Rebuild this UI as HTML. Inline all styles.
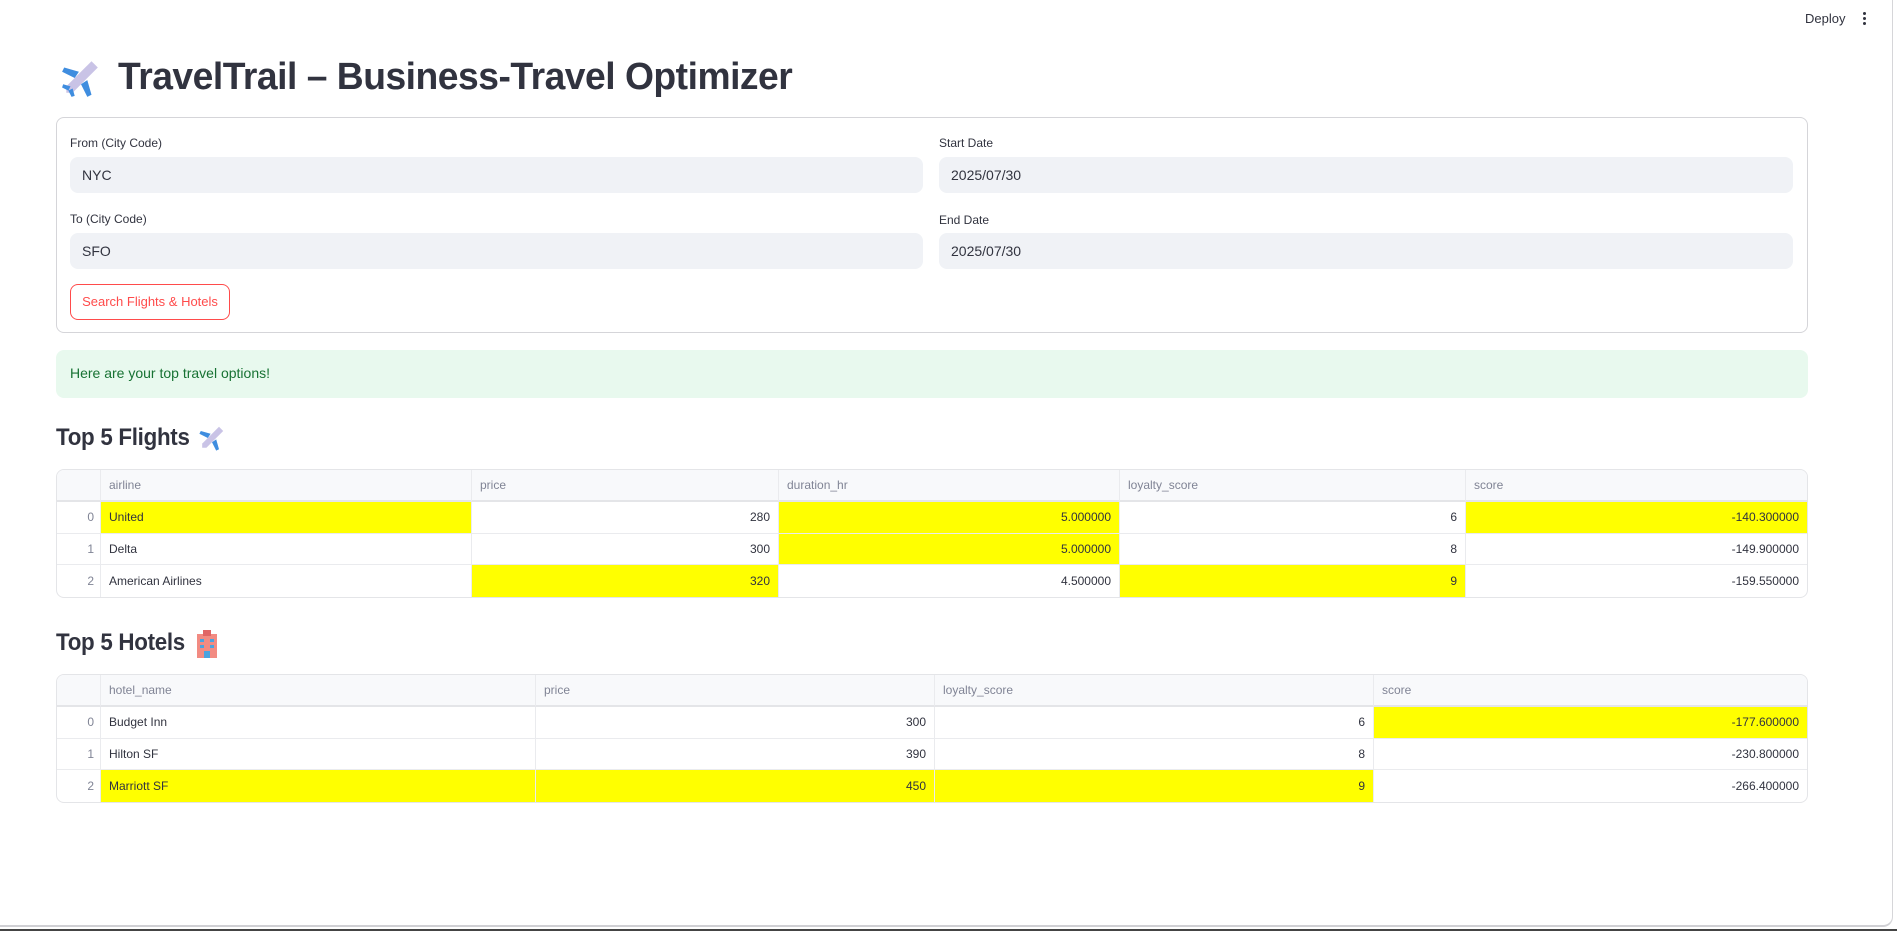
<!DOCTYPE html>
<html><head><meta charset="utf-8">
<style>
*{box-sizing:border-box;margin:0;padding:0}
html,body{width:1897px;height:931px;overflow:hidden;background:#fff;font-family:"Liberation Sans",sans-serif;color:#31333f}
.abs{position:absolute}
.frame{position:absolute;left:0;top:0;width:1893px;height:927px;border-right:1px solid #d6d6d9;border-bottom:2px solid #d0d0d4;border-bottom-right-radius:10px}
.bottom{position:absolute;left:0;top:929px;width:1897px;height:2px;background:#444}
.deploy{left:1805px;top:11px;font-size:13px;color:#31333f}
.dots{left:1863px;top:12px;width:4px}
.dots i{display:block;width:3px;height:3px;border-radius:50%;background:#31333f;margin-bottom:2px}
h1{position:absolute;left:118px;top:56px;font-size:38px;font-weight:700;letter-spacing:-0.5px;white-space:nowrap;transform:scaleX(0.98);transform-origin:left}
.form{left:56px;top:117px;width:1752px;height:216px;border:1px solid #d5d5d9;border-radius:8px}
.lbl{font-size:12px;color:#31333f}
.inp{background:#f0f2f6;border-radius:8px;height:36px;font-size:14px;padding:10px 12px;color:#31333f}
.btn{left:70px;top:284px;width:160px;height:36px;border:1px solid #ff4b4b;border-radius:8px;color:#ff4b4b;font-size:13px;text-align:center;line-height:34px}
.ok{left:56px;top:350px;width:1752px;height:48px;background:#e8f9ee;border-radius:8px;color:#177233;font-size:14px;padding:15px 14px}
h2{position:absolute;font-size:24px;font-weight:700;letter-spacing:-0.3px;white-space:nowrap;transform:scaleX(0.93);transform-origin:left}
table{position:absolute;border-collapse:separate;border-spacing:0;border:1px solid #e4e5e8;border-radius:8px;overflow:hidden;font-size:12px;table-layout:fixed;color:#31333f}
td,th{height:31.5px;border-right:1px solid #eaebee;border-bottom:1px solid #eaebee;padding:0 8px;font-weight:400;white-space:nowrap}
th{background:#f8f9fb;color:#808495;text-align:left;height:32px;border-bottom:2px solid #e4e5e8}
tr:last-child td{border-bottom:none}
td:last-child,th:last-child{border-right:none}
td.i{text-align:right;color:#808495;padding-right:6px}
td.n{text-align:right}
.y{background:#ffff00}
</style></head><body>
<div class="frame"></div><div class="bottom"></div>
<div class="abs deploy">Deploy</div>
<div class="abs dots"><i></i><i></i><i></i></div>

<svg class="abs" style="left:60px;top:57px" width="42" height="42" viewBox="0 0 40 40">
<path d="M30 4 L36 10 L12 34 L6 34 L6 28 Z" fill="#c9c3e6"/>
<path d="M18 14 L4 10 L2 14 L14 20 Z" fill="#3f8ddf"/>
<path d="M26 22 L30 36 L26 38 L20 26 Z" fill="#3f8ddf"/>
<path d="M10 28 L3 26 L2 29 L8 32 Z" fill="#3f8ddf"/>
<path d="M12 30 L14 37 L11 38 L8 32 Z" fill="#3f8ddf"/>
</svg>
<h1>TravelTrail – Business-Travel Optimizer</h1>

<div class="abs form"></div>
<div class="abs lbl" style="left:70px;top:136px">From (City Code)</div>
<div class="abs inp" style="left:70px;top:157px;width:853px">NYC</div>
<div class="abs lbl" style="left:939px;top:136px">Start Date</div>
<div class="abs inp" style="left:939px;top:157px;width:854px">2025/07/30</div>
<div class="abs lbl" style="left:70px;top:212px">To (City Code)</div>
<div class="abs inp" style="left:70px;top:233px;width:853px">SFO</div>
<div class="abs lbl" style="left:939px;top:213px">End Date</div>
<div class="abs inp" style="left:939px;top:233px;width:854px">2025/07/30</div>
<div class="abs btn">Search Flights &amp; Hotels</div>

<div class="abs ok">Here are your top travel options!</div>

<h2 style="left:56px;top:424px">Top 5 Flights</h2>
<svg class="abs" style="left:198px;top:424px" width="28" height="28" viewBox="0 0 40 40">
<path d="M30 4 L36 10 L12 34 L6 34 L6 28 Z" fill="#c9c3e6"/>
<path d="M18 14 L4 10 L2 14 L14 20 Z" fill="#3f8ddf"/>
<path d="M26 22 L30 36 L26 38 L20 26 Z" fill="#3f8ddf"/>
</svg>
<table style="left:56px;top:469px;width:1752px">
<colgroup><col style="width:44px"><col style="width:371px"><col style="width:307px"><col style="width:341px"><col style="width:346px"><col></colgroup>
<tr><th></th><th>airline</th><th>price</th><th>duration_hr</th><th>loyalty_score</th><th>score</th></tr>
<tr><td class="i">0</td><td class="y">United</td><td class="n">280</td><td class="n y">5.000000</td><td class="n">6</td><td class="n y">-140.300000</td></tr>
<tr><td class="i">1</td><td>Delta</td><td class="n">300</td><td class="n y">5.000000</td><td class="n">8</td><td class="n">-149.900000</td></tr>
<tr><td class="i">2</td><td>American Airlines</td><td class="n y">320</td><td class="n">4.500000</td><td class="n y">9</td><td class="n">-159.550000</td></tr>
</table>

<h2 style="left:56px;top:629px">Top 5 Hotels</h2>
<svg class="abs" style="left:194px;top:630px" width="26" height="28" viewBox="0 0 26 28">
<rect x="3" y="4" width="20" height="24" fill="#f28b82"/>
<rect x="9" y="0" width="8" height="6" fill="#e06666"/>
<rect x="6" y="9" width="4" height="3" fill="#4aa3df"/><rect x="16" y="9" width="4" height="3" fill="#4aa3df"/>
<rect x="6" y="15" width="4" height="3" fill="#4aa3df"/><rect x="16" y="15" width="4" height="3" fill="#4aa3df"/>
<rect x="10" y="21" width="6" height="7" fill="#4aa3df"/>
</svg>
<table style="left:56px;top:674px;width:1752px">
<colgroup><col style="width:44px"><col style="width:435px"><col style="width:399px"><col style="width:439px"><col></colgroup>
<tr><th></th><th>hotel_name</th><th>price</th><th>loyalty_score</th><th>score</th></tr>
<tr><td class="i">0</td><td>Budget Inn</td><td class="n">300</td><td class="n">6</td><td class="n y">-177.600000</td></tr>
<tr><td class="i">1</td><td>Hilton SF</td><td class="n">390</td><td class="n">8</td><td class="n">-230.800000</td></tr>
<tr><td class="i">2</td><td class="y">Marriott SF</td><td class="n y">450</td><td class="n y">9</td><td class="n">-266.400000</td></tr>
</table>
</body></html>
